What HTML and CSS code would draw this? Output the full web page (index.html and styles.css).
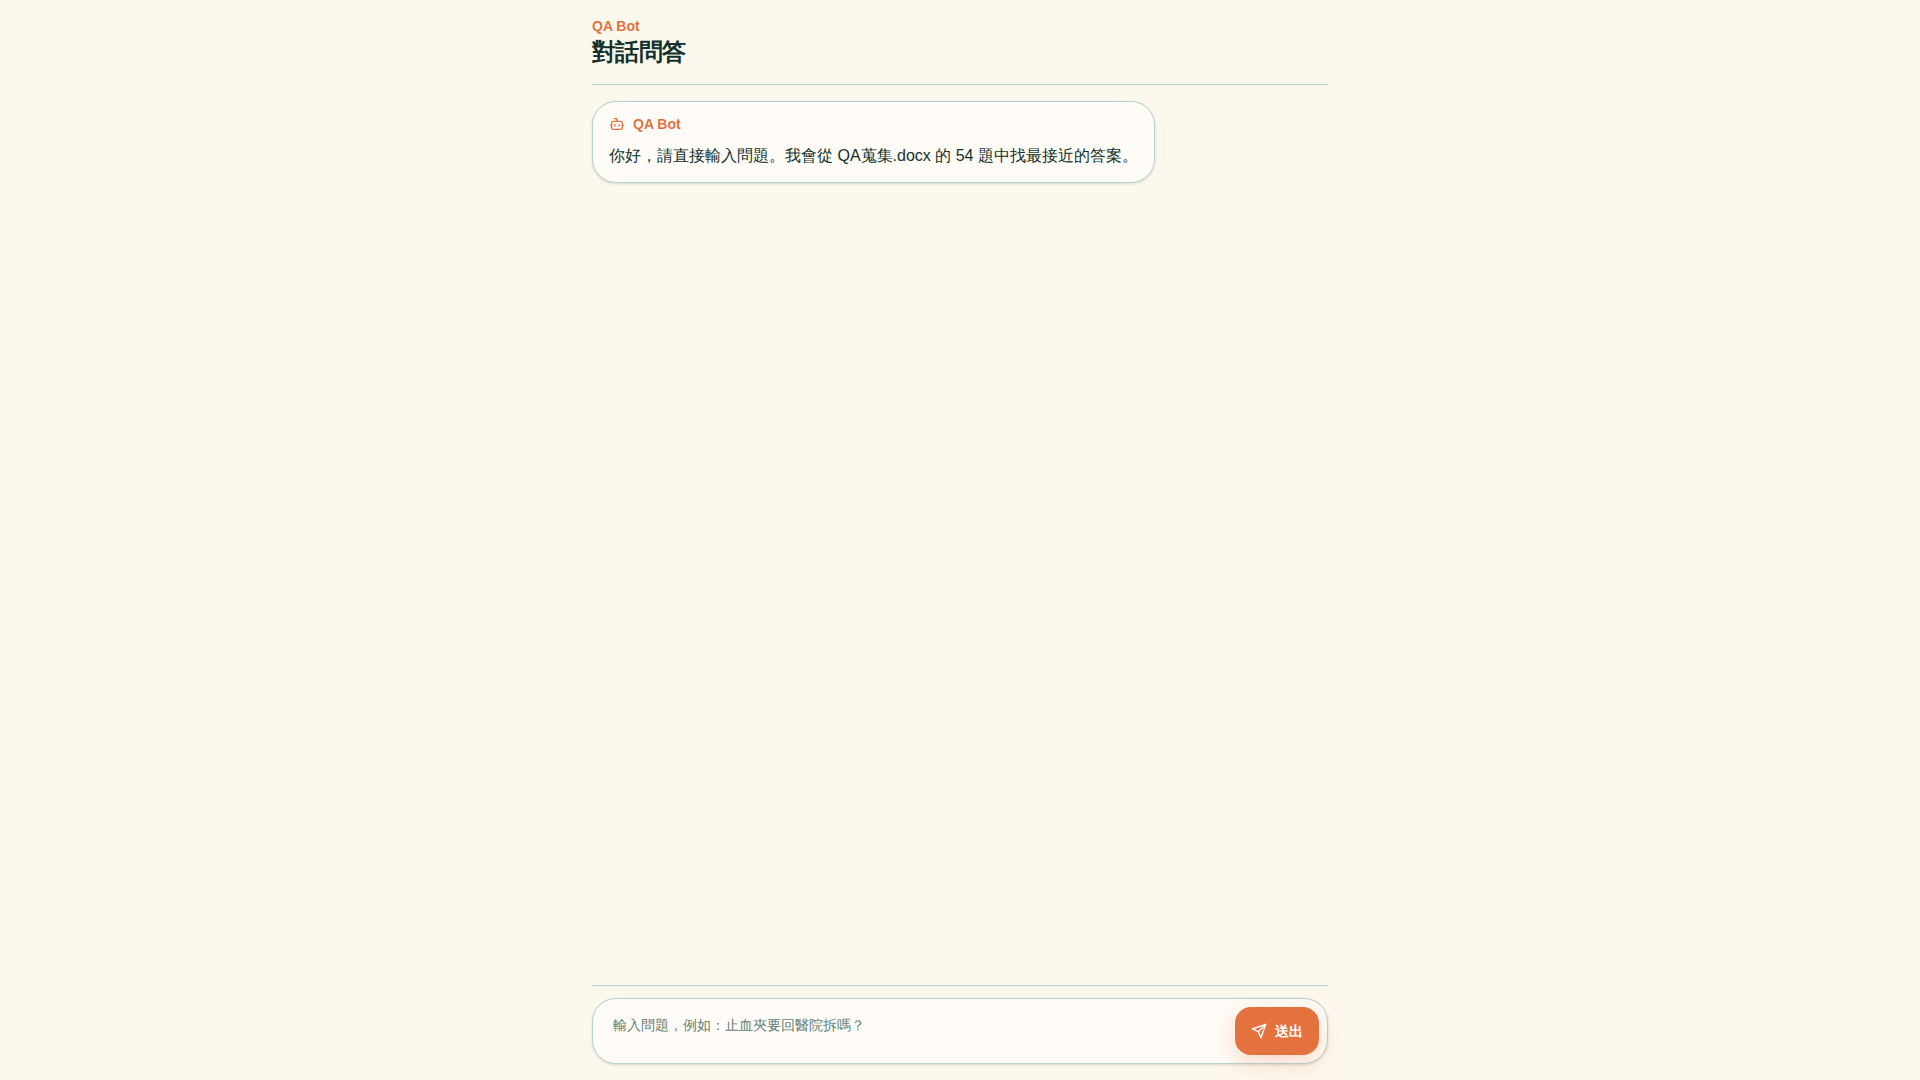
FILE: index.html
```html
<!DOCTYPE html>
<html>
<head>
	<meta charset="UTF-8">
	<title>QA Bot</title>
	<link rel="stylesheet" href="styles.css">
</head>
<body>
	<div class="Page">
		<header class="Header">
			<p class="HeaderEyebrow">QA Bot</p>
			<h1 class="HeaderTitle">對話問答</h1>
		</header>
		<main class="Messages">
			<div class="Bubble">
				<div class="BubbleLabel">
					<svg class="Icon" viewBox="0 0 24 24" fill="none" stroke="currentColor" stroke-width="2" stroke-linecap="round" stroke-linejoin="round">
						<path d="M12 8V4H8"/>
						<rect x="4" y="8" width="16" height="12" rx="2"/>
						<path d="M2 14h2"/>
						<path d="M20 14h2"/>
						<path d="M15 13v2"/>
						<path d="M9 13v2"/>
					</svg>
					<span>QA Bot</span>
				</div>
				<p class="BubbleText">你好，請直接輸入問題。我會從 QA蒐集.docx 的 54 題中找最接近的答案。</p>
			</div>
		</main>
		<footer class="Composer">
			<form class="ComposerBox">
				<textarea class="ComposerInput" rows="2" placeholder="輸入問題，例如：止血夾要回醫院拆嗎？"></textarea>
				<button class="SendButton" type="button">
					<svg class="Icon" viewBox="0 0 24 24" fill="none" stroke="currentColor" stroke-width="2" stroke-linecap="round" stroke-linejoin="round">
						<path d="m22 2-7 20-4-9-9-4Z"/>
						<path d="M22 2 11 13"/>
					</svg>
					<span>送出</span>
				</button>
			</form>
		</footer>
	</div>
</body>
</html>
```

FILE: styles.css
```css
* {
	box-sizing: border-box;
}

body {
	margin: 0;
	background-color: #fdf8ee;
	color: #12312b;
	font-family: "Liberation Sans", sans-serif;
}

.Page {
	display: flex;
	flex-direction: column;
	width: 768px;
	height: 100vh;
	margin: 0 auto;
	padding: 0 16px;
}

.Header {
	padding: 16px 0;
	border-bottom: 1px solid #b5d2d2;
}

.HeaderEyebrow {
	margin: 0;
	color: #e4723f;
	font-size: 14px;
	font-weight: 700;
	line-height: 20px;
}

.HeaderTitle {
	margin: 0;
	font-size: 24px;
	font-weight: 700;
	line-height: 32px;
	letter-spacing: -.6px;
}

.Messages {
	flex: 1;
	display: flex;
	flex-direction: column;
	align-items: flex-start;
	padding: 16px 0;
}

.Bubble {
	padding: 12px 16px;
	background-color: #fffcf7;
	border: 1px solid #b5d2d2;
	border-radius: 24px;
	box-shadow: 0 1px 3px rgba(18, 49, 43, .16);
}

.BubbleLabel {
	display: flex;
	align-items: center;
	gap: 8px;
	margin-bottom: 8px;
	color: #e4723f;
	font-size: 14px;
	font-weight: 700;
	line-height: 20px;
}

.BubbleText {
	margin: 0;
	font-size: 16px;
	line-height: 28px;
}

.Icon {
	width: 16px;
	height: 16px;
	flex: none;
}

.Composer {
	padding: 12px 0 16px;
	border-top: 1px solid #b5d2d2;
}

.ComposerBox {
	display: flex;
	align-items: center;
	gap: 8px;
	padding: 8px;
	background-color: #fffcf7;
	border: 1px solid #b5d2d2;
	border-radius: 24px;
	box-shadow: 0 1px 3px rgba(18, 49, 43, .16);
}

.ComposerInput {
	flex: 1;
	height: 48px;
	padding: 8px 12px;
	background: transparent;
	border: 0;
	outline: 0;
	resize: none;
	color: #12312b;
	font-family: inherit;
	font-size: 14px;
	line-height: 20px;
}

.ComposerInput::placeholder {
	color: #5f7f78;
	opacity: 1;
}

.SendButton {
	display: flex;
	align-items: center;
	justify-content: center;
	gap: 8px;
	width: 84px;
	height: 48px;
	background-color: #e4723f;
	border: 0;
	border-radius: 16px;
	box-shadow: 0 8px 24px rgba(228, 114, 63, .25);
	color: #fff;
	font-family: inherit;
	font-size: 14px;
	font-weight: 600;
	line-height: 20px;
}
```
